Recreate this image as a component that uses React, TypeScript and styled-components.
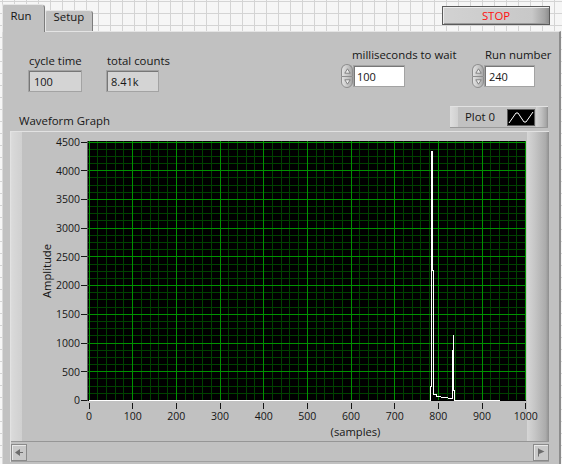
import React from "react";
import styled, { createGlobalStyle } from "styled-components";

const GlobalStyle = createGlobalStyle`
  html, body { margin: 0; padding: 0; }
  body {
    width: 562px;
    height: 464px;
    overflow: hidden;
    background-color: #f6f6f6;
    background-image:
      linear-gradient(to right, #d4d4d4 1px, transparent 1px),
      linear-gradient(to bottom, #d4d4d4 1px, transparent 1px);
    background-size: 12px 12px;
    background-position: 2px 1px;
    font-family: "Open Sans", "Noto Sans", sans-serif;
    color: #161616;
  }
`;

const PANEL = "#c1c1c1";

const Page = styled.div`
  width: 562px;
  height: 464px;
  box-sizing: border-box;
  padding: 4px 0 0 2px;
  overflow: hidden;
`;

const TabControl = styled.div`
  width: 559px;
  display: flex;
  flex-direction: column;
`;

const TabStrip = styled.div`
  display: flex;
  align-items: flex-end;
  height: 27px;
`;

const Tab = styled.div<{ $active?: boolean }>`
  box-sizing: border-box;
  width: ${(p) => (p.$active ? 43 : 48)}px;
  height: ${(p) => (p.$active ? 28 : 21)}px;
  margin-bottom: ${(p) => (p.$active ? -1 : 0)}px;
  position: relative;
  z-index: ${(p) => (p.$active ? 2 : 1)};
  background: ${PANEL};
  border-top: 1px solid #e6e6e6;
  border-left: 1px solid #e6e6e6;
  border-right: 1px solid #7c7c7c;
  border-radius: 2px 4px 0 0;
  padding: ${(p) => (p.$active ? "3.5px 0 0 7.5px" : "0 0 0 7.5px")};
  font-size: 11.4px;
  line-height: ${(p) => (p.$active ? 14 : 12)}px;
  white-space: nowrap;
`;

const StopButton = styled.button`
  align-self: flex-start;
  margin: 2px 11px 0 auto;
  width: 108px;
  height: 19px;
  box-sizing: border-box;
  padding: 0;
  border: 1px solid #5a5a5a;
  background: linear-gradient(to right, #d2d2d2 0%, #c8c8c8 84%, #a4a4a4 96%, #8e8e8e 100%);
  box-shadow: inset 1px 1px 0 #ededed, inset 0 -1px 0 #9a9a9a;
  color: #ff1010;
  font-family: "Open Sans", "Noto Sans", sans-serif;
  font-size: 11.4px;
  line-height: 15px;
`;

const Body = styled.div`
  box-sizing: border-box;
  height: 433px;
  background: ${PANEL};
  border-top: 1px solid #e4e4e4;
  border-left: 1px solid #dadada;
  border-right: 2px solid #8c8c8c;
  display: flex;
  flex-direction: column;
`;

const ControlsRow = styled.div`
  display: flex;
  align-items: flex-start;
  height: 60px;
`;

const Group = styled.div<{ $top: number; $left: number; $gap: number }>`
  display: flex;
  margin-top: ${(p) => p.$top}px;
  margin-left: ${(p) => p.$left}px;
  gap: ${(p) => p.$gap}px;
`;

const Field = styled.div<{ $width: number }>`
  display: flex;
  flex-direction: column;
  width: ${(p) => p.$width}px;
`;

const Label = styled.div<{ $indent?: number }>`
  font-size: 11.4px;
  line-height: 14px;
  height: 14px;
  margin-bottom: 2px;
  padding-left: ${(p) => p.$indent ?? 0}px;
  white-space: nowrap;
`;

const ValueBox = styled.div<{ $width: number; $editable?: boolean; $pad: number }>`
  box-sizing: border-box;
  width: ${(p) => p.$width}px;
  height: 22px;
  border: 1px solid #a3a3a3;
  box-shadow: inset 1px 1px 0 #777777;
  background: ${(p) => (p.$editable ? "#ffffff" : "#d4d4d4")};
  padding-left: ${(p) => p.$pad}px;
  font-size: 11px;
  line-height: 21px;
  overflow: hidden;
  white-space: nowrap;
`;

const InputRow = styled.div`
  display: flex;
  align-items: center;
  height: 24px;
`;

const Spinner = styled.div`
  display: flex;
  flex-direction: column;
  width: 12px;
  height: 24px;
`;

const SpinHalf = styled.div<{ $up?: boolean }>`
  box-sizing: border-box;
  height: 12px;
  display: flex;
  align-items: center;
  justify-content: center;
  border: 1px solid #8e8e8e;
  border-bottom-width: ${(p) => (p.$up ? 0 : 1)}px;
  border-radius: ${(p) => (p.$up ? "6px 6px 0 0" : "0 0 6px 6px")};
  background: linear-gradient(to right, #e2e2e2, #c4c4c4 60%, #a8a8a8);
`;

const GraphHeader = styled.div`
  display: flex;
  align-items: flex-end;
  margin: 14px 0 0 7px;
  width: 539px;
  height: 22px;
`;

const GraphLabel = styled.div`
  margin-left: 9px;
  font-size: 11.4px;
  line-height: 14px;
  white-space: nowrap;
`;

const Legend = styled.div`
  align-self: stretch;
  margin-left: auto;
  margin-right: 1px;
  width: 98px;
  box-sizing: border-box;
  display: flex;
  align-items: center;
  border-top: 1px solid #e2e2e2;
  border-bottom: 1px solid #9a9a9a;
  background: ${PANEL};
`;

const LegendLeft = styled.div`
  align-self: stretch;
  width: 8px;
  background: linear-gradient(to right, #dedede, #d0d0d0);
`;

const LegendText = styled.div`
  margin-left: 7px;
  font-size: 11.4px;
  line-height: 14px;
  white-space: nowrap;
`;

const Swatch = styled.div`
  margin-left: auto;
  margin-right: 1px;
  width: 28px;
  height: 17px;
  box-sizing: border-box;
  border: 1px solid #5a5a5a;
  background: #000;
  display: flex;
`;

const LegendRight = styled.div`
  align-self: stretch;
  width: 12px;
  background: linear-gradient(to right, #d4d4d4, #c0c0c0 45%, #a6a6a6 85%, #8c8c8c);
`;

const GraphFrame = styled.div`
  margin: 3px 0 0 7px;
  width: 539px;
  box-sizing: border-box;
  border-top: 1px solid #e2e2e2;
  border-left: 1px solid #e2e2e2;
  display: flex;
  flex-direction: column;
`;

const GraphMain = styled.div`
  display: flex;
  height: 309px;
`;

const LeftStrip = styled.div`
  width: 11px;
  background: linear-gradient(to right, #dcdcdc 0%, #d8d8d8 20%, #d0d0d0 100%);
`;

const RightStrip = styled.div`
  width: 22px;
  background: linear-gradient(to right, #d6d6d6 0%, #c6c6c6 35%, #ababab 85%, #8e8e8e 100%);
`;

const ChartSvg = styled.svg`
  display: block;
  flex: none;
  overflow: visible;
  position: relative;
  z-index: 1;
  font-family: "Open Sans", "Noto Sans", sans-serif;
  fill: #161616;
`;

const ScrollBar = styled.div`
  box-sizing: border-box;
  height: 21px;
  border-top: 1px solid #969696;
  border-bottom: 1px solid #a0a0a0;
  padding-top: 2px;
  display: flex;
  justify-content: space-between;
  align-items: flex-start;
`;

const ScrollButton = styled.div`
  box-sizing: border-box;
  width: 16px;
  height: 17px;
  border: 1px solid #8a8a8a;
  box-shadow: inset 1px 1px 0 #e8e8e8;
  background: #c8c8c8;
  display: flex;
  align-items: center;
  justify-content: center;
`;

// ---------- chart ----------
const X0 = 67;
const XS = 0.4367;
const xp = (s: number) => X0 + s * XS;
const Y0 = 268.5;
const YS = (268.5 - 10) / 4500;
const yp = (v: number) => Y0 - v * YS;
const crisp = (n: number) => Math.floor(n) + 0.5;

const MAJOR = "#009200";
const MINOR = "#004200";

const buildTrace = () => {
  const v: number[] = new Array(942).fill(0);
  v[782] = 240;
  v[783] = 240;
  v[784] = 240;
  v[785] = 4330;
  v[786] = 4330;
  v[787] = 2260;
  v[788] = 2260;
  for (let i = 789; i <= 795; i++) v[i] = 105;
  for (let i = 796; i <= 807; i++) v[i] = 78 - (i - 796) * 1.6;
  for (let i = 808; i <= 822; i++) v[i] = 45;
  for (let i = 823; i <= 832; i++) v[i] = 30;
  v[833] = 560;
  v[834] = 1130;
  v[835] = 1130;
  return v;
};

const Chart: React.FC = () => {
  const trace = buildTrace();
  const points = trace.map((v, i) => `${xp(i).toFixed(2)},${yp(v).toFixed(2)}`).join(" ");
  const minorX: number[] = [];
  const majorX: number[] = [];
  for (let s = 0; s <= 1000; s += 20) (s % 100 === 0 ? majorX : minorX).push(s);
  const minorY: number[] = [];
  const majorY: number[] = [];
  for (let v = 0; v <= 4500; v += 125) (v % 500 === 0 ? majorY : minorY).push(v);
  const yLabels = majorY;
  const xLabels = majorX;

  return (
    <ChartSvg width={505} height={309} viewBox="0 0 505 309">
      <rect x={66} y={9} width={438} height={260} fill="#000" />
      <g shapeRendering="crispEdges" strokeWidth={1}>
        {minorX.map((s) => (
          <line key={`mx${s}`} x1={crisp(xp(s))} x2={crisp(xp(s))} y1={9} y2={268} stroke={MINOR} />
        ))}
        {minorY.map((v) => (
          <line key={`my${v}`} x1={66} x2={504} y1={crisp(yp(v))} y2={crisp(yp(v))} stroke={MINOR} />
        ))}
        {majorX.map((s) => (
          <line key={`Mx${s}`} x1={crisp(xp(s))} x2={crisp(xp(s))} y1={9} y2={268} stroke={MAJOR} />
        ))}
        {majorY
          .filter((v) => v > 0)
          .map((v) => (
            <line key={`My${v}`} x1={66} x2={504} y1={crisp(yp(v))} y2={crisp(yp(v))} stroke={MAJOR} />
          ))}
        <line x1={65.5} x2={65.5} y1={9} y2={269} stroke="#5a5a5a" />
      </g>
      <polyline points={points} fill="none" stroke="#ffffff" strokeWidth={1} shapeRendering="crispEdges" />
      <g shapeRendering="crispEdges" stroke="#161616" strokeWidth={1}>
        {yLabels.map((v) => (
          <line key={`ty${v}`} x1={59} x2={65} y1={crisp(yp(v))} y2={crisp(yp(v))} />
        ))}
        {xLabels.map((s) => (
          <line key={`tx${s}`} x1={crisp(xp(s))} x2={crisp(xp(s))} y1={271} y2={277} />
        ))}
      </g>
      <g fontSize={10.5}>
        {yLabels.map((v) => (
          <text key={`ly${v}`} x={58} y={yp(v) + 3.8} textAnchor="end">
            {v}
          </text>
        ))}
        {xLabels.map((s) => (
          <text key={`lx${s}`} x={xp(s)} y={288} textAnchor="middle">
            {s}
          </text>
        ))}
      </g>
      <text x={333.5} y={304} fontSize={11.2} textAnchor="middle">
        (samples)
      </text>
      <text transform="translate(28.5,139) rotate(-90)" fontSize={11.2} textAnchor="middle">
        Amplitude
      </text>
    </ChartSvg>
  );
};

const UpArrow = () => (
  <svg width="7" height="6" viewBox="0 0 7 6">
    <polygon points="3.5,0.8 6.2,5.2 0.8,5.2" fill="#ececec" stroke="#6e6e6e" strokeWidth="0.8" />
  </svg>
);
const DownArrow = () => (
  <svg width="7" height="6" viewBox="0 0 7 6">
    <polygon points="0.8,0.8 6.2,0.8 3.5,5.2" fill="#ececec" stroke="#6e6e6e" strokeWidth="0.8" />
  </svg>
);

const NumericSpin: React.FC = () => (
  <Spinner>
    <SpinHalf $up>
      <UpArrow />
    </SpinHalf>
    <SpinHalf>
      <DownArrow />
    </SpinHalf>
  </Spinner>
);

const LeftScrollIcon = () => (
  <svg width="10" height="9" viewBox="0 0 10 9">
    <polygon points="1,4.5 6,1 6,8" fill="#6c6c6c" />
    <line x1="6" y1="4.5" x2="9" y2="4.5" stroke="#6c6c6c" strokeWidth="1" />
  </svg>
);
const RightScrollIcon = () => (
  <svg width="10" height="9" viewBox="0 0 10 9">
    <line x1="2.5" y1="0.5" x2="2.5" y2="8.5" stroke="#6c6c6c" strokeWidth="1" />
    <polygon points="3,1 8.5,3.5 3,6" fill="#6c6c6c" />
  </svg>
);

export default function App() {
  return (
    <>
      <GlobalStyle />
      <Page>
        <TabControl>
          <TabStrip>
            <Tab $active>Run</Tab>
            <Tab>Setup</Tab>
            <StopButton>STOP</StopButton>
          </TabStrip>
          <Body>
            <ControlsRow>
              <Group $top={22} $left={25} $gap={24}>
                <Field $width={54}>
                  <Label $indent={1}>cycle time</Label>
                  <ValueBox $width={54} $pad={5}>
                    100
                  </ValueBox>
                </Field>
                <Field $width={53}>
                  <Label $indent={1}>total counts</Label>
                  <ValueBox $width={53} $pad={4}>
                    8.41k
                  </ValueBox>
                </Field>
              </Group>
              <Group $top={16} $left={182} $gap={0}>
                <Field $width={131}>
                  <Label $indent={11}>milliseconds to wait</Label>
                  <InputRow>
                    <NumericSpin />
                    <ValueBox $width={52} $editable $pad={3}>
                      100
                    </ValueBox>
                  </InputRow>
                </Field>
                <Field $width={80}>
                  <Label $indent={13}>Run number</Label>
                  <InputRow>
                    <NumericSpin />
                    <ValueBox $width={51} $editable $pad={4}>
                      240
                    </ValueBox>
                  </InputRow>
                </Field>
              </Group>
            </ControlsRow>
            <GraphHeader>
              <GraphLabel>Waveform Graph</GraphLabel>
              <Legend>
                <LegendLeft />
                <LegendText>Plot 0</LegendText>
                <Swatch>
                  <svg width="26" height="15" viewBox="0 0 26 15">
                    <polyline points="1,13 8,3 10,3 16,12 18,12 25,2" fill="none" stroke="#fff" strokeWidth="1" />
                  </svg>
                </Swatch>
                <LegendRight />
              </Legend>
            </GraphHeader>
            <GraphFrame>
              <GraphMain>
                <LeftStrip />
                <Chart />
                <RightStrip />
              </GraphMain>
              <ScrollBar>
                <ScrollButton>
                  <LeftScrollIcon />
                </ScrollButton>
                <ScrollButton>
                  <RightScrollIcon />
                </ScrollButton>
              </ScrollBar>
            </GraphFrame>
          </Body>
        </TabControl>
      </Page>
    </>
  );
}
